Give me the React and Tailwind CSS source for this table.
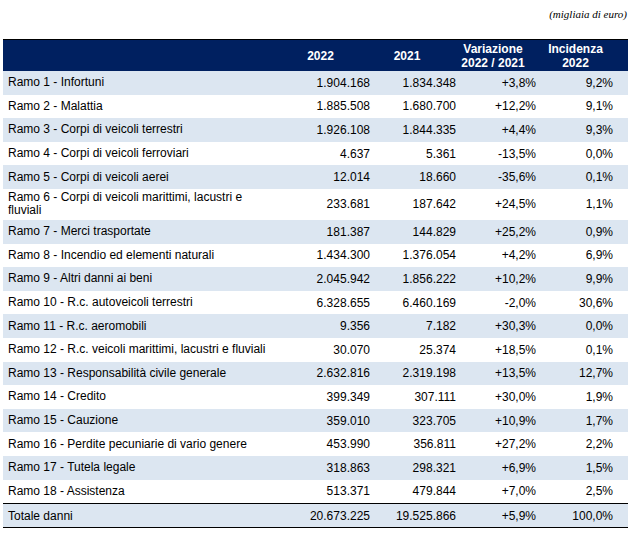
import React from "react";

const rows = [
  ["Ramo 1 - Infortuni", "1.904.168", "1.834.348", "+3,8%", "9,2%"],
  ["Ramo 2 - Malattia", "1.885.508", "1.680.700", "+12,2%", "9,1%"],
  ["Ramo 3 - Corpi di veicoli terrestri", "1.926.108", "1.844.335", "+4,4%", "9,3%"],
  ["Ramo 4 - Corpi di veicoli ferroviari", "4.637", "5.361", "-13,5%", "0,0%"],
  ["Ramo 5 - Corpi di veicoli aerei", "12.014", "18.660", "-35,6%", "0,1%"],
  ["WRAP", "233.681", "187.642", "+24,5%", "1,1%"],
  ["Ramo 7 - Merci trasportate", "181.387", "144.829", "+25,2%", "0,9%"],
  ["Ramo 8 - Incendio ed elementi naturali", "1.434.300", "1.376.054", "+4,2%", "6,9%"],
  ["Ramo 9 - Altri danni ai beni", "2.045.942", "1.856.222", "+10,2%", "9,9%"],
  ["Ramo 10 - R.c. autoveicoli terrestri", "6.328.655", "6.460.169", "-2,0%", "30,6%"],
  ["Ramo 11 - R.c. aeromobili", "9.356", "7.182", "+30,3%", "0,0%"],
  ["Ramo 12 - R.c. veicoli marittimi, lacustri e fluviali", "30.070", "25.374", "+18,5%", "0,1%"],
  ["Ramo 13 - Responsabilità civile generale", "2.632.816", "2.319.198", "+13,5%", "12,7%"],
  ["Ramo 14 - Credito", "399.349", "307.111", "+30,0%", "1,9%"],
  ["Ramo 15 - Cauzione", "359.010", "323.705", "+10,9%", "1,7%"],
  ["Ramo 16 - Perdite pecuniarie di vario genere", "453.990", "356.811", "+27,2%", "2,2%"],
  ["Ramo 17 - Tutela legale", "318.863", "298.321", "+6,9%", "1,5%"],
  ["Ramo 18 - Assistenza", "513.371", "479.844", "+7,0%", "2,5%"],
];

const cols = "grid grid-cols-[272px_95px_86px_80px_77px_14px]";

function Row({ r, shaded }) {
  const wrap = r[0] === "WRAP";
  return (
    <div
      className={`${cols} items-center text-[12px] text-black ${
        wrap ? "h-[31px]" : "h-[23.6px]"
      } ${shaded ? "bg-[#dce6f1]" : "bg-white"}`}
    >
      <div className="pl-[5px] leading-[13px]">
        {wrap ? (
          <>
            Ramo 6 - Corpi di veicoli marittimi, lacustri e
            <br />
            fluviali
          </>
        ) : (
          r[0]
        )}
      </div>
      <div className="text-right">{r[1]}</div>
      <div className="text-right">{r[2]}</div>
      <div className="text-right">{r[3]}</div>
      <div className="text-right">{r[4]}</div>
      <div />
    </div>
  );
}

export default function App() {
  return (
    <div
      className="w-[631px] h-[534px] bg-white px-[3px] pt-[6px]"
      style={{ fontFamily: '"Liberation Sans", Arial, sans-serif' }}
    >
      <div
        className="text-right italic text-[11px] text-black pr-[1px] h-[33px]"
        style={{ fontFamily: '"Liberation Serif", "Times New Roman", serif' }}
      >
        (migliaia di euro)
      </div>
      <div className="w-[625px]">
        <div className={`${cols} h-[32px] items-center bg-[#002060] border-t border-black text-white font-bold text-[12px] leading-[14px]`}>
          <div />
          <div className="text-center pr-[4px]">2022</div>
          <div className="text-center pr-[12px]">2021</div>
          <div className="text-center pr-[6px]">
            Variazione
            <br />
            2022 / 2021
          </div>
          <div className="text-center pl-[2px]">
            Incidenza
            <br />
            2022
          </div>
          <div />
        </div>
        {rows.map((r, i) => (
          <Row key={i} r={r} shaded={i % 2 === 0} />
        ))}
        <div className={`${cols} h-[25px] items-center text-[12px] text-black bg-[#dce6f1] border-t-[1.5px] border-b-[1.5px] border-black`}>
          <div className="pl-[5px]">Totale danni</div>
          <div className="text-right">20.673.225</div>
          <div className="text-right">19.525.866</div>
          <div className="text-right">+5,9%</div>
          <div className="text-right">100,0%</div>
          <div />
        </div>
      </div>
    </div>
  );
}
